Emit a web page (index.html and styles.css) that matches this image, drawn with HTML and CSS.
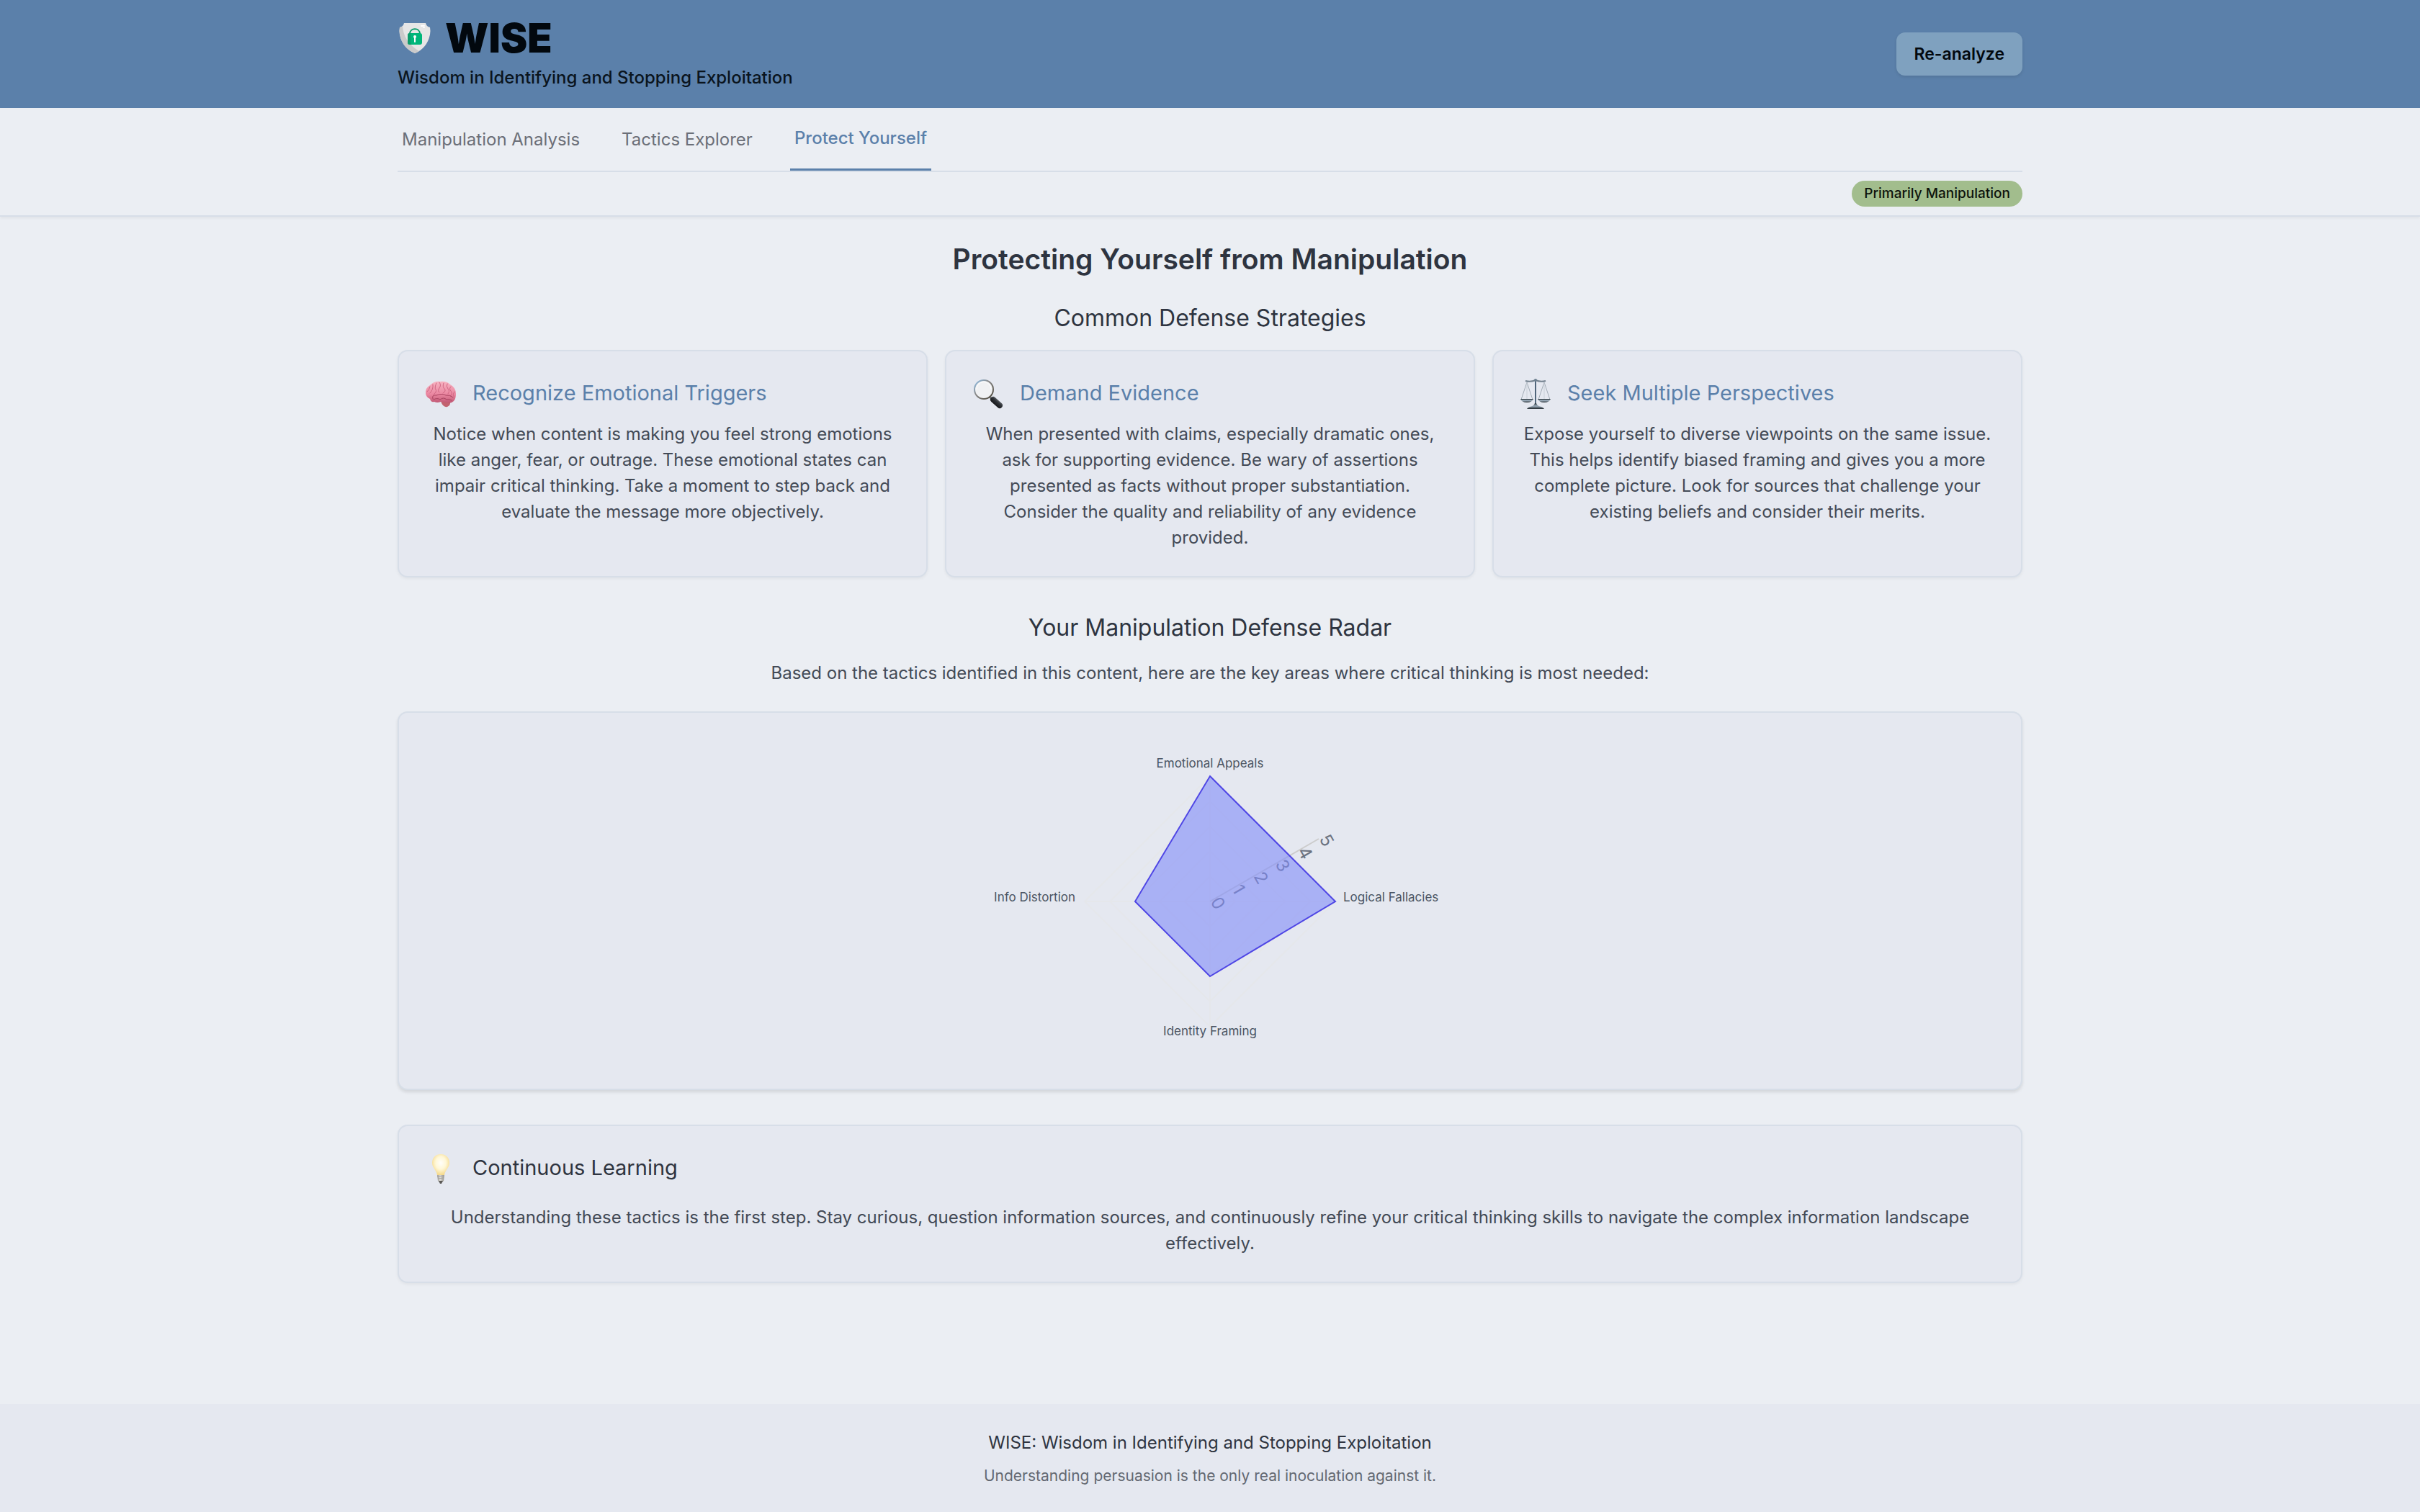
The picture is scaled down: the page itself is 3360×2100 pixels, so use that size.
FILE: index.html
```
<!DOCTYPE html>
<html lang="en">
<head>
<meta charset="utf-8">
<meta name="viewport" content="width=device-width, initial-scale=1">
<title>WISE</title>
<link rel="stylesheet" href="styles.css">
</head>
<body>
<header class="header">
  <div class="container header-inner">
    <div class="brand">
      <div class="brand-row">
        <svg class="brand-logo" viewBox="0 0 44 44" aria-hidden="true">
          <path fill="#e6e6e6" d="M7 1h30q1 5 6 6 1 5 0 10Q39 36 22 43 5 36 1 17 0 12 1 7q5-1 6-6z"/>
          <path fill="#cacaca" d="M1 7q3 0 4-2 1 22 23 35-3 2-6 3Q5 36 1 17 0 12 1 7z"/>
          <path fill="none" stroke="#0b9c6a" stroke-width="2" d="M15 16c0-9 14-9 14 0"/>
          <rect x="12" y="15" width="20" height="16" rx="3" fill="#00b67a"/>
          <path fill="#0b9c6a" d="M15 15h1v13q0 3 3 3h-4q-3 0-3-3V18q0-3 3-3z"/>
          <circle cx="22" cy="20" r="2" fill="#fff"/>
          <rect x="21" y="20" width="2" height="8" rx="1" fill="#fff"/>
          <rect x="30" y="4" width="6" height="2" rx="1" fill="#fff"/>
          <rect x="33" y="7" width="3" height="1" fill="#fff"/>
        </svg>
        <h1 class="brand-name">WISE</h1>
      </div>
      <p class="brand-tagline">Wisdom in Identifying and Stopping Exploitation</p>
    </div>
    <button class="action-button" type="button">Re-analyze</button>
  </div>
</header>

<div class="toolbar">
  <div class="container">
    <nav class="tabs" aria-label="Sections">
      <button class="tab" type="button">Manipulation Analysis</button>
      <button class="tab" type="button">Tactics Explorer</button>
      <button class="tab tab-active" type="button" aria-current="page">Protect Yourself</button>
    </nav>
    <div class="status">
      <span class="badge">Primarily Manipulation</span>
    </div>
  </div>
</div>

<main class="container main">
  <h2 class="page-title">Protecting Yourself from Manipulation</h2>

  <section class="section">
    <h3 class="section-title">Common Defense Strategies</h3>
    <div class="strategies">
      <article class="card">
        <div class="card-head">
          <svg class="card-icon" viewBox="0 0 48 48" aria-hidden="true">
            <defs>
              <linearGradient id="brain" x1="0" y1="0" x2="0" y2="1">
                <stop offset="0" stop-color="#f7b3c2"/><stop offset=".6" stop-color="#ea86a0"/><stop offset="1" stop-color="#bf5672"/>
              </linearGradient>
            </defs>
            <path fill="#c2626f" d="M24 34q6-1 13 2 1 5-4 7-5 1-8-5z"/>
            <path fill="url(#brain)" d="M3 25Q2 17 9 13q6-6 14-5 9-1 14 4 8 4 8 13 0 7-3 10-4 4-9 2-6 0-9-1-5 2-9 0-5 1-6-4-5-2-6-7z"/>
            <g fill="none" stroke="#cf6582" stroke-width="1" stroke-linecap="round">
              <path d="M9 15q-1 5-4 7M13 12q1 7-4 12M18 10q-3 6-1 9t-3 7M22 9q3 4 0 8t0 6M28 10q-2 5 1 8t-2 6M33 11q-2 4 1 7t0 7M38 15q-3 3 0 6t-1 8M43 22q-3 3-1 7"/>
              <path stroke="#a8425f" d="M13 32q-2-6 5-5 8-3 13 0 6-1 10 3M14 33q5-3 9 0 5-4 9 0 4-1 7 1"/>
            </g>
          </svg>
          <h4 class="card-title">Recognize Emotional Triggers</h4>
        </div>
        <p class="card-text">Notice when content is making you feel strong emotions like anger, fear, or outrage. These emotional states can impair critical thinking. Take a moment to step back and evaluate the message more objectively.</p>
      </article>

      <article class="card">
        <div class="card-head">
          <svg class="card-icon" viewBox="0 0 48 48" aria-hidden="true">
            <defs>
              <linearGradient id="rim" x1="0" y1="0" x2="1" y2="1">
                <stop offset="0" stop-color="#8fc1ea"/><stop offset=".4" stop-color="#8c8c8c"/><stop offset="1" stop-color="#4b4538"/>
              </linearGradient>
              <linearGradient id="handle" x1="0" y1="1" x2="1" y2="0">
                <stop offset="0" stop-color="#0d0d0f"/><stop offset=".6" stop-color="#303338"/><stop offset="1" stop-color="#70757a"/>
              </linearGradient>
            </defs>
            <path stroke="#777a7c" stroke-width="3" d="M26 29l4 4"/>
            <path stroke="url(#handle)" stroke-width="8" stroke-linecap="round" d="M31 33l9 8"/>
            <circle cx="18" cy="19" r="13" fill="#f0f1f3" stroke="url(#rim)" stroke-width="2"/>
            <path fill="none" stroke="#fff" stroke-width="1" d="M8 19a10 10 0 0 1 20-1"/>
          </svg>
          <h4 class="card-title">Demand Evidence</h4>
        </div>
        <p class="card-text">When presented with claims, especially dramatic ones, ask for supporting evidence. Be wary of assertions presented as facts without proper substantiation. Consider the quality and reliability of any evidence provided.</p>
      </article>

      <article class="card">
        <div class="card-head">
          <svg class="card-icon" viewBox="0 0 48 48" aria-hidden="true">
            <defs>
              <linearGradient id="steel" x1="0" y1="0" x2="0" y2="1">
                <stop offset="0" stop-color="#293238"/><stop offset=".5" stop-color="#9fb0bf"/><stop offset="1" stop-color="#1f262b"/>
              </linearGradient>
            </defs>
            <g fill="none" stroke="#a3adb7" stroke-width="1">
              <path d="M12 9L4 33M12 9l8 24M36 9l-8 24M36 9l8 24"/>
              <path stroke="#c9d0d8" d="M12 9v24M36 9v24"/>
            </g>
            <path fill="none" stroke="#74828f" stroke-width="2" d="M10 7q7 2 14-1 7 3 14 1"/>
            <path stroke="#50657a" stroke-width="2" d="M24 6v34"/>
            <circle cx="24" cy="6" r="2" fill="#6d7f8f"/>
            <path fill="url(#steel)" d="M3 32h18q-2 5-9 5t-9-5zM27 32h18q-2 5-9 5t-9-5z"/>
            <path fill="url(#steel)" d="M23 38h2q1 4 7 5 3 1 4 3H12q1-2 4-3 6-1 7-5z"/>
          </svg>
          <h4 class="card-title">Seek Multiple Perspectives</h4>
        </div>
        <p class="card-text">Expose yourself to diverse viewpoints on the same issue. This helps identify biased framing and gives you a more complete picture. Look for sources that challenge your existing beliefs and consider their merits.</p>
      </article>
    </div>
  </section>

  <section class="section">
    <h3 class="section-title">Your Manipulation Defense Radar</h3>
    <p class="section-lead">Based on the tactics identified in this content, here are the key areas where critical thinking is most needed:</p>
    <div class="chart-card">
      <svg class="chart" viewBox="-350 -240 700 480" role="img" aria-label="Manipulation defense radar">
        <g class="chart-grid">
          <path d="M0-174V174M-174 0H174"/>
          <path d="M0-35L35 0 0 35-35 0zM0-70L70 0 0 70-70 0zM0-104L104 0 0 104-104 0zM0-139L139 0 0 139-139 0zM0-174L174 0 0 174-174 0z"/>
        </g>
        <path class="chart-axis" d="M0 0L151-87"/>
        <g class="chart-ticks">
          <text transform="translate(0 0) rotate(60)">0</text>
          <text transform="translate(30 -17) rotate(60)">1</text>
          <text transform="translate(60 -35) rotate(60)">2</text>
          <text transform="translate(90 -52) rotate(60)">3</text>
          <text transform="translate(121 -70) rotate(60)">4</text>
          <text transform="translate(151 -87) rotate(60)">5</text>
        </g>
        <path class="chart-area" d="M0-174L174 0 0 104-104 0z"/>
        <g class="chart-labels">
          <text x="0" y="-186" text-anchor="middle">Emotional Appeals</text>
          <text x="185" y="0">Logical Fallacies</text>
          <text x="0" y="186" text-anchor="middle">Identity Framing</text>
          <text x="-187" y="0" text-anchor="end">Info Distortion</text>
        </g>
      </svg>
    </div>
  </section>

  <section class="card card-wide">
    <div class="card-head">
      <svg class="card-icon" viewBox="0 0 48 48" aria-hidden="true">
        <defs>
          <radialGradient id="glow" cx=".5" cy=".42" r=".6">
            <stop offset="0" stop-color="#fffefa"/><stop offset=".5" stop-color="#fff7d6"/><stop offset="1" stop-color="#f4d685"/>
          </radialGradient>
          <linearGradient id="cap" x1="0" y1="0" x2="1" y2="0">
            <stop offset="0" stop-color="#8f8c86"/><stop offset=".4" stop-color="#e3e1dc"/><stop offset="1" stop-color="#8f8c86"/>
          </linearGradient>
        </defs>
        <path fill="url(#cap)" d="M19 33h10l-1 9-2 2h-4l-2-2z"/>
        <path fill="#5a5855" d="M21 42h6l-2 4h-2z"/>
        <path stroke="#a5a29c" stroke-width="1" d="M19 36l9-1M20 39l8-1"/>
        <path fill="url(#glow)" d="M24 5c8 0 12 6 12 12 0 7-6 10-7 17H19c-1-7-7-10-7-17 0-6 4-12 12-12z"/>
      </svg>
      <h3 class="card-title card-title-dark">Continuous Learning</h3>
    </div>
    <p class="card-text">Understanding these tactics is the first step. Stay curious, question information sources, and continuously refine your critical thinking skills to navigate the complex information landscape effectively.</p>
  </section>
</main>

<footer class="footer">
  <p class="footer-title">WISE: Wisdom in Identifying and Stopping Exploitation</p>
  <p class="footer-note">Understanding persuasion is the only real inoculation against it.</p>
</footer>
</body>
</html>
```
FILE: styles.css
```
* {
  box-sizing: border-box;
}

h1, h2, h3, h4, p {
  margin: 0;
  font-weight: 400;
}

body {
  margin: 0;
  min-height: 100vh;
  display: flex;
  flex-direction: column;
  background: #ebeef3;
  color: #2e3440;
  font-family: Inter, "Liberation Sans", sans-serif;
  font-size: 24px;
  line-height: 36px;
}

button {
  margin: 0;
  border: 0;
  background: none;
  font: inherit;
  cursor: pointer;
}

.container {
  width: 100%;
  max-width: 2304px;
  margin: 0 auto;
  padding: 0 24px;
}

/* Header */
.header {
  padding: 24px 0;
  background: #5b80aa;
  color: #02080e;
}

.header-inner {
  display: flex;
  align-items: center;
  justify-content: space-between;
}

.brand {
  display: flex;
  flex-direction: column;
  gap: 8px;
}

.brand-row {
  display: flex;
  align-items: center;
  gap: 18px;
}

.brand-logo {
  width: 48px;
  height: 44px;
}

.brand-name {
  font-size: 56px;
  font-weight: 900;
  line-height: 58px;
}

.brand-tagline {
  font-weight: 500;
  color: #0a141d;
}

.action-button {
  padding: 12px 25px;
  border-radius: 12px;
  background: #7fa1bf;
  box-shadow: 0 2px 4px rgba(0, 0, 0, 0.1);
  color: #02080e;
  font-size: 23px;
  font-weight: 600;
}

/* Tabs and status */
.toolbar {
  border-bottom: 2px solid #d7dee8;
  box-shadow: 0 2px 4px rgba(0, 0, 0, 0.05);
}

.tabs {
  display: flex;
  gap: 46px;
  height: 89px;
  border-bottom: 2px solid #d7dee8;
}

.tab {
  padding: 0 6px;
  color: #6b6f78;
}

.tab-active {
  border-bottom: 3px solid #5b80aa;
  color: #5b80aa;
  font-weight: 500;
}

.status {
  display: flex;
  justify-content: flex-end;
  padding: 12px 0;
}

.badge {
  padding: 0 17px;
  border-radius: 18px;
  background: #a2bd8d;
  color: #0e130c;
  font-size: 19px;
  font-weight: 500;
}

/* Main content */
.main {
  flex: 1;
  padding-top: 37px;
  padding-bottom: 48px;
}

.page-title {
  margin-bottom: 38px;
  font-size: 39px;
  font-weight: 600;
  line-height: 44px;
  text-align: center;
}

.section {
  margin-bottom: 48px;
}

.section-title {
  margin-bottom: 22px;
  font-size: 32px;
  font-weight: 400;
  line-height: 44px;
  text-align: center;
}

.section-lead {
  margin-bottom: 34px;
  color: #434a56;
  line-height: 38px;
  text-align: center;
}

.strategies {
  display: grid;
  grid-template-columns: repeat(3, 1fr);
  gap: 24px;
}

.card,
.chart-card {
  border: 2px solid #d7dee8;
  border-radius: 14px;
  background: #e5e8f0;
}

.card {
  padding: 37px 36px 35px;
  box-shadow: 0 2px 4px rgba(0, 0, 0, 0.05);
}

.card-head {
  display: flex;
  align-items: center;
  gap: 20px;
  height: 42px;
  margin: 0 0 18px -2px;
}

.card-wide .card-head {
  margin-bottom: 30px;
}

.card-icon {
  width: 48px;
  height: 48px;
}

.card-title {
  color: #5b80aa;
  font-size: 29px;
  font-weight: 400;
  line-height: 42px;
}

.card-title-dark {
  color: #2e3440;
}

.card-text {
  color: #434a56;
  text-align: center;
}

/* Radar chart */
.chart-card {
  display: flex;
  justify-content: center;
  padding: 22px 20px 20px;
  box-shadow: 0 3px 4px rgba(0, 0, 0, 0.1);
}

.chart {
  width: 700px;
  height: 480px;
}

.chart-grid {
  fill: none;
  stroke: #e5e7eb;
  stroke-width: 2;
}

.chart-axis {
  stroke: #cccccc;
  stroke-width: 2;
}

.chart-ticks {
  fill: #6b7280;
  font-size: 24px;
}

.chart-area {
  fill: #818cf8;
  fill-opacity: 0.6;
  stroke: #4f46e5;
  stroke-width: 2;
}

.chart-labels {
  fill: #4b5563;
  font-size: 17px;
}

/* Footer */
.footer {
  display: flex;
  flex-direction: column;
  gap: 14px;
  padding: 36px 24px;
  background: #e5e8f0;
  text-align: center;
}

.footer-note {
  color: #636872;
  font-size: 21px;
  line-height: 28px;
}
```
